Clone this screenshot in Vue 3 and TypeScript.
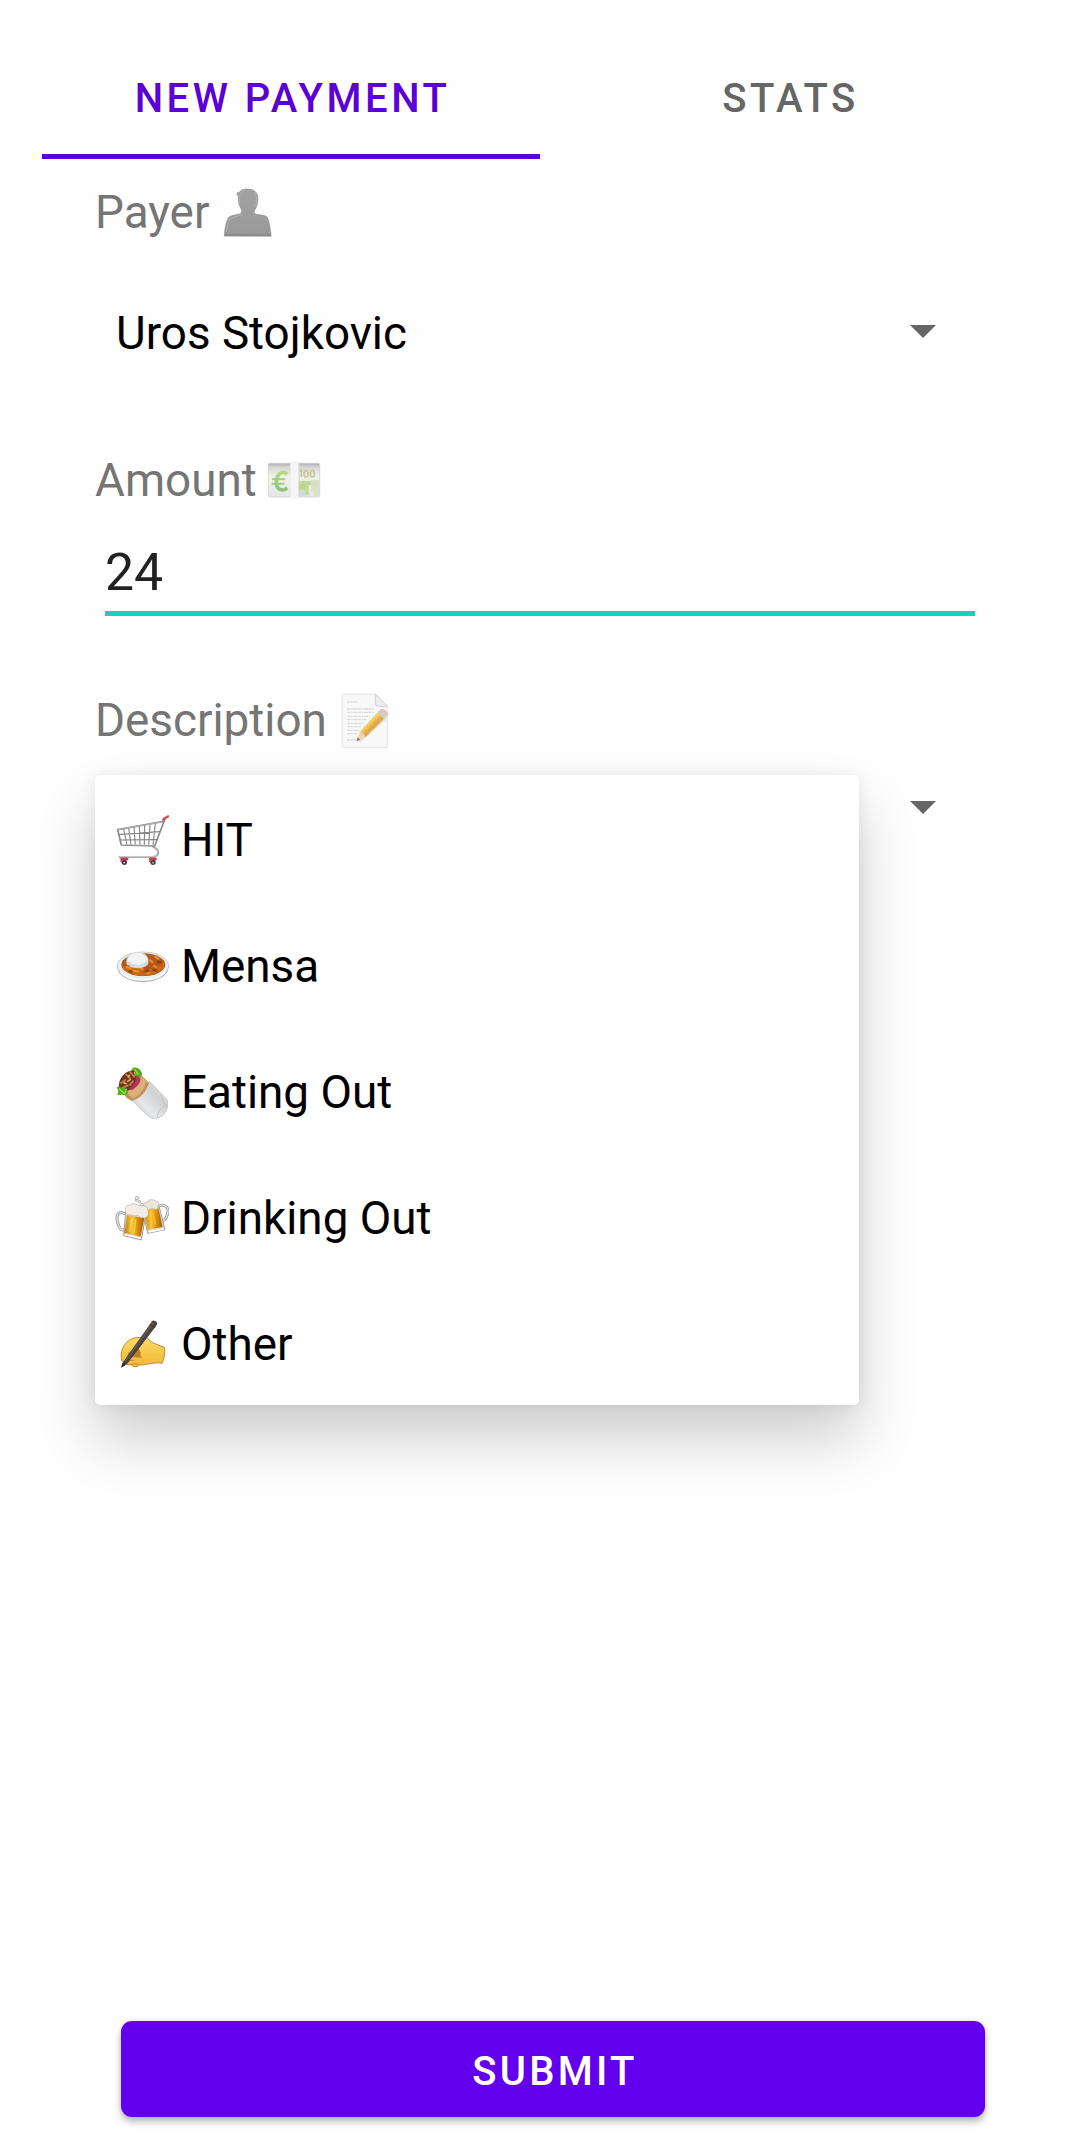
<script setup lang="ts">
const options: { id: string; label: string; viewBox: string }[] = [
  { id: 'cart', label: 'HIT', viewBox: '30 -75 162 378' },
  { id: 'curry', label: 'Mensa', viewBox: '30 -87 162 378' },
  { id: 'wrap', label: 'Eating Out', viewBox: '30 -84 162 378' },
  { id: 'beer', label: 'Drinking Out', viewBox: '30 -81 162 378' },
  { id: 'hand', label: 'Other', viewBox: '30 -78 162 378' },
]
</script>

<template>
  <div class="page">
    <nav class="tabs">
      <div class="tab active">NEW PAYMENT</div>
      <div class="tab">STATS</div>
    </nav>

    <main class="form">
      <div class="label payer">
        <span>Payer</span>
        <svg width="65" height="65" viewBox="0 0 195 195">
          <defs>
            <linearGradient id="bust" x1="0" y1="0" x2="0" y2="1">
              <stop offset="0" stop-color="#a2a2a2" />
              <stop offset="1" stop-color="#999" />
            </linearGradient>
          </defs>
          <path d="M28 168 C29 146 34 120 42 111 C52 104 72 105 79 99 C82 95 80 89 77 84 C71 75 69 59 70 48 L66 45 L67 38 L73 37 C79 28 91 26 103 28 C117 29 126 37 128 49 C130 63 127 78 121 87 C117 94 115 101 124 103 C136 106 151 105 157 112 C163 124 166 150 168 164 L168 169 Z" fill="url(#bust)" stroke="#8d8d8d" stroke-width="2" />
          <path d="M34 156 C37 134 41 119 47 115 C57 108 76 111 83 101 M75 72 C71 56 74 44 78 40 M122 79 C127 63 126 48 120 38" fill="none" stroke="#b4b4b4" stroke-width="2.5" />
          <path d="M29 165 H167" stroke="#858585" stroke-width="4" />
          <path d="M27 169 H168" stroke="#c9c9c9" stroke-width="2" />
        </svg>
      </div>

      <div class="select">
        <span>Uros Stojkovic</span>
        <svg class="caret" width="26" height="13" viewBox="0 0 26 13"><path d="M0 0H26L13 13Z" fill="#666" /></svg>
      </div>

      <div class="label amount">
        <span>Amount</span>
        <svg width="70" height="60" viewBox="0 0 210 180">
          <defs>
            <linearGradient id="note" x1="0" y1="0" x2="0" y2="1">
              <stop offset="0" stop-color="#b0b0b0" />
              <stop offset=".13" stop-color="#d9dad8" />
              <stop offset=".4" stop-color="#eff2ec" />
              <stop offset="1" stop-color="#e6e7e6" />
            </linearGradient>
            <linearGradient id="euro" x1="0" y1="0" x2="0" y2="1">
              <stop offset="0" stop-color="#b4d780" />
              <stop offset="1" stop-color="#8cc47a" />
            </linearGradient>
          </defs>
          <rect x="25" y="40" width="154" height="101" rx="4" fill="url(#note)" stroke="#cdcdcd" stroke-width="2" />
          <path d="M82 72 C65 60 50 73 49 95 C48 118 64 126 82 114" fill="none" stroke="url(#euro)" stroke-width="11" />
          <path d="M36 85 H76 V91 H36Z M35 98 H73 V104 H35Z" fill="#a2cd7e" />
          <path d="M115 92 H153 V105 H137 V137 H115 Z M153 90 H178 V137 H160 V122 H153 Z" fill="#d8e6c5" />
          <path d="M116 93 H153 V106 H146 V136 H136 V107 H116Z" fill="#bfdb93" />
          <path d="M117 106 L136 101 V121 H117 Z" fill="#b9d78d" />
          <path d="M118 122 H134 V138 H118 Z" fill="#ccdbe3" />
          <path d="M153 96 L174 94 L177 107 L163 113 L153 105 Z" fill="#d6dfc5" />
          <path d="M119 64 L124 60 V82" fill="none" stroke="#c9c59b" stroke-width="5" />
          <ellipse cx="138" cy="71" rx="6" ry="10" fill="none" stroke="#c9c59b" stroke-width="5" />
          <ellipse cx="157" cy="71" rx="6" ry="10" fill="none" stroke="#c9c59b" stroke-width="5" />
          <path d="M91 37 H116 V143 H91 Z" fill="#f6f6f6" stroke="#e9e9e9" stroke-width="2" />
          <path d="M117 42 V139" stroke="#d0d0d0" stroke-width="2" />
        </svg>
      </div>

      <div class="input">24</div>

      <div class="label description">
        <span>Description</span>
        <svg width="65" height="70" viewBox="0 0 195 210">
          <defs>
            <linearGradient id="pencil" gradientUnits="userSpaceOnUse" x1="94" y1="105" x2="113" y2="124">
              <stop offset="0" stop-color="#fae18d" />
              <stop offset=".5" stop-color="#f6ce67" />
              <stop offset="1" stop-color="#dda94a" />
            </linearGradient>
          </defs>
          <path d="M26 27 H122 L157 64 V188 H26 Q22 188 22 184 V31 Q22 27 26 27Z" fill="#f8f8f8" stroke="#e0e0e0" stroke-width="2.5" />
          <path d="M121 27 L157 64 H130 Q121 64 121 54Z" fill="#ededed" stroke="#cbcbcb" stroke-width="2.5" />
          <path d="M37 51 H69" stroke="#cecece" stroke-width="3" stroke-dasharray="7 2" />
          <path d="M37 72 H119 M37 82 H116 M37 94 H105 M37 104 H96 M37 115 H86 M37 125 H79 M37 136 H72 M37 146 H69 M37 165 H64" stroke="#dadada" stroke-width="4" stroke-dasharray="9 2 5 2 12 2" />
          <path d="M73 170 L151 101 L159 86" fill="none" stroke="#d5d5d5" stroke-width="7" opacity=".6" />
          <path d="M75 139 L128 81 L147 101 L91 157 Z" fill="url(#pencil)" />
          <path d="M75 139 L65 168 L91 157 C90 149 84 150 85 144 C80 146 77 142 75 139Z" fill="#f1d7ae" />
          <path d="M65 168 L68 157 L76 164Z" fill="#777" />
          <path d="M128 81 L134 75 L153 94 L147 101Z" fill="#c8cdcf" />
          <path d="M134 75 L138 72 Q151 71 158 84 L158 88 L153 94Z" fill="#e9bdb0" />
        </svg>
      </div>

      <div class="select">
        <span></span>
        <svg class="caret" width="26" height="13" viewBox="0 0 26 13"><path d="M0 0H26L13 13Z" fill="#666" /></svg>

        <ul class="dropdown">
          <li v-for="o in options" :key="o.id">
            <svg width="54" height="126" :viewBox="o.viewBox">
              <g v-if="o.id === 'cart'" fill="none" stroke-linecap="round" stroke-linejoin="round">
                <path d="M44 171 H143 C158 170 163 160 158 151 C155 144 147 143 143 139" stroke="#aaa" stroke-width="6" />
                <path d="M45 169 H143 C154 169 158 160 155 153" stroke="#e1e1e1" stroke-width="2" />
                <path d="M56 87 L66 135 M71 84 L78 135 M87 81 L91 136 M103 78 L105 136 M119 75 L118 137 M135 72 L131 137 M151 69 L144 137 M41 104 L164 95 M44 120 L158 119" stroke="#858585" stroke-width="3.4" />
                <path d="M173 65 L38 89 L49 135 L149 138 L180 57" stroke="#898989" stroke-width="5" />
                <path d="M172 66 L40 88 M50 133 L147 136" stroke="#d7d7d7" stroke-width="1.6" />
                <path d="M175 59 C178 53 184 53 189 49" stroke="#d6454f" stroke-width="7" />
                <path d="M50 177 H66 M136 177 H151" stroke="#c93b47" stroke-width="9" />
                <circle cx="58" cy="187" r="8" fill="#463b40" /><circle cx="144" cy="187" r="8" fill="#463b40" />
                <circle cx="58" cy="188" r="2.7" fill="#bbb" /><circle cx="144" cy="188" r="2.7" fill="#bbb" />
                <path d="M48 185 Q49 177 60 178 M134 185 Q136 177 148 178" stroke="#c93b47" stroke-width="4" />
              </g>
              <g v-else-if="o.id === 'curry'">
                <ellipse cx="114" cy="113" rx="76" ry="43" fill="#a9b2b8" />
                <ellipse cx="114" cy="108" rx="77" ry="42" fill="#e9eef1" stroke="#b9c3c9" stroke-width="2.5" />
                <ellipse cx="115" cy="104" rx="66" ry="34" fill="#b0591a" />
                <path d="M52 106 C64 119 90 110 108 116 C130 125 160 114 176 93 C187 111 160 136 116 137 C80 138 49 122 52 106Z" fill="#c46a18" />
                <path d="M65 111 L76 114 M85 123 L99 124 M106 113 L112 116 M136 91 L142 96 M147 108 L153 111 M151 80 L160 86 M125 128 L131 130" stroke="#e58e2a" stroke-width="7" stroke-linecap="round" />
                <path d="M74 124 L80 126 M121 124 L130 122 M158 96 L167 97 M145 119 L154 122" stroke="#8f3c10" stroke-width="7" stroke-linecap="round" />
                <path d="M135 107 L140 109 M112 126 L117 128 M164 105 L168 106" stroke="#d94c20" stroke-width="6" stroke-linecap="round" />
                <path d="M64 99 C62 81 76 66 97 66 C119 66 134 80 130 98 C129 111 113 111 102 115 C89 114 77 115 73 106 C67 106 64 104 64 99Z" fill="#d5dadd" />
                <path d="M68 94 C68 77 80 68 97 68 C113 68 126 78 127 90 C120 101 108 98 102 106 C93 101 79 107 77 96Z" fill="#f2f4f4" />
                <path d="M47 127 C72 157 154 158 180 127" fill="none" stroke="#fff" stroke-width="5" />
              </g>
              <g v-else-if="o.id === 'wrap'">
                <defs>
                  <linearGradient id="paper" x1="0" y1="1" x2="1" y2="0">
                    <stop offset="0" stop-color="#b0b2b4" />
                    <stop offset=".35" stop-color="#e7e8e9" />
                    <stop offset=".65" stop-color="#d0d1d3" />
                    <stop offset="1" stop-color="#eee" />
                  </linearGradient>
                </defs>
                <path d="M46 97 C57 75 82 61 105 57 L133 86 L83 137 L65 128Z" fill="#dcae78" stroke="#b98048" stroke-width="2" />
                <path d="M57 112 L82 135 C101 130 120 112 127 82" fill="none" stroke="#c98d52" stroke-width="8" />
                <path d="M82 137 C107 130 127 109 134 79 L186 134 C194 156 180 184 157 190 C146 194 135 188 128 182Z" fill="url(#paper)" stroke="#bcbdbe" stroke-width="2" />
                <path d="M169 118 C171 137 181 151 189 156 M158 189 C155 168 174 154 188 148" fill="none" stroke="#b7b9bb" stroke-width="2" />
                <path d="M42 98 C39 77 53 53 76 47 C94 40 109 54 105 70 C101 90 80 109 59 108Z" fill="#6b3521" />
                <path d="M48 84 L61 75 M63 58 L75 70 M76 51 L87 65 M52 99 L68 91 M75 90 L84 79" stroke="#c27a46" stroke-width="6" stroke-linecap="round" />
                <path d="M57 83 L63 86 M70 65 L73 61 M68 79 L76 74 M89 53 L92 61" stroke="#e2b567" stroke-width="5" stroke-linecap="round" />
                <path d="M72 105 C79 94 86 93 89 82 C93 76 96 70 91 66 L101 61 C113 72 105 91 83 104Z" fill="#b73262" />
                <path d="M80 44 C85 33 97 38 104 43 L112 56 L105 70 L96 62 L86 64 L91 51Z M35 97 L43 94 L49 99 L60 96 L70 112 L63 121 L50 119 L37 120 L40 109Z" fill="#52ac1e" />
                <path d="M90 44 L99 58 M43 102 L57 115 M64 103 L60 114" stroke="#a0d94c" stroke-width="4" stroke-linecap="round" />
              </g>
              <g v-else-if="o.id === 'beer'">
                <defs>
                  <linearGradient id="lager" x1="0" y1="0" x2="1" y2="0">
                    <stop offset="0" stop-color="#c97808" />
                    <stop offset=".4" stop-color="#f9c93a" />
                    <stop offset=".65" stop-color="#dd910a" />
                    <stop offset="1" stop-color="#a95d08" />
                  </linearGradient>
                </defs>
                <path d="M61 101 C39 93 32 106 38 127 C42 146 50 154 60 148" fill="none" stroke="#96989a" stroke-width="9" />
                <path d="M61 101 C39 93 32 106 38 127 C42 146 50 154 60 148" fill="none" stroke="#e2e3e4" stroke-width="4" />
                <path d="M164 77 C184 71 193 86 187 104 C182 119 175 125 167 121" fill="none" stroke="#96989a" stroke-width="9" />
                <path d="M164 77 C184 71 193 86 187 104 C182 119 175 125 167 121" fill="none" stroke="#e2e3e4" stroke-width="4" />
                <path d="M111 83 L161 74 L180 149 L128 160 Z" fill="#e2e2e2" stroke="#8d8e8f" stroke-width="2.5" />
                <path d="M116 90 L160 82 L173 141 L128 150 Z" fill="url(#lager)" />
                <path d="M62 94 L122 105 L109 180 L56 167 Z" fill="#e2e2e2" stroke="#8d8e8f" stroke-width="2.5" />
                <path d="M66 105 L118 114 L107 170 L58 159Z" fill="url(#lager)" />
                <path d="M80 116 L74 155 M92 118 L87 159" stroke="#ffe06c" stroke-width="4" opacity=".7" />
                <path d="M143 98 L151 133" stroke="#f8b929" stroke-width="5" />
                <path d="M116 90 C108 81 115 66 128 66 C131 56 147 58 151 63 C160 62 164 73 159 79 C160 90 151 91 142 84 C135 85 126 96 116 90Z" fill="#ece5db" stroke="#b3aaa0" stroke-width="2" />
                <path d="M62 97 C59 87 61 76 72 76 C79 67 95 72 100 77 C113 72 128 78 128 90 C133 99 129 113 119 113 C109 115 102 111 98 105 C88 113 79 103 73 104 C66 107 64 103 62 97Z" fill="#f3ede5" stroke="#b9aea2" stroke-width="2" />
                <path d="M70 107 C79 104 85 112 93 109" stroke="#e9b98c" stroke-width="4" fill="none" />
                <g fill="#eee" stroke="#999" stroke-width="2"><circle cx="96" cy="54" r="5" /><circle cx="103" cy="65" r="4" /><circle cx="111" cy="74" r="4" /><circle cx="93" cy="61" r="3" /></g>
                <path d="M59 164 L107 175 M131 156 L176 147" stroke="#fff" stroke-width="4" />
              </g>
              <g v-else stroke-linejoin="round">
                <defs>
                  <linearGradient id="skin" x1="0" y1="0" x2="0" y2="1">
                    <stop offset="0" stop-color="#ffdc62" />
                    <stop offset="1" stop-color="#f1b637" />
                  </linearGradient>
                </defs>
                <path d="M49 160 C47 143 52 126 65 112 C78 99 96 96 109 98 C118 93 129 98 132 105 C145 117 164 121 178 127 C182 143 177 162 171 175 C153 171 141 176 124 178 C111 182 104 178 101 181 C96 187 84 186 79 179 C66 181 57 177 62 171 C53 173 49 168 49 160Z" fill="url(#skin)" stroke="#ad7626" stroke-width="2.5" />
                <path d="M70 143 C83 139 98 138 101 129 L107 144 C104 155 109 158 111 158 C97 155 78 159 67 154Z" fill="#be7c24" />
                <path d="M71 151 C87 149 97 160 111 157 M63 171 C67 166 78 165 89 166 M80 179 C85 175 91 176 100 178" fill="none" stroke="#c48a2d" stroke-width="3" />
                <path d="M49 187 L54 172 L138 53 Q142 44 150 48 Q160 51 155 61 L66 177Z" fill="#49423f" />
                <path d="M61 169 L145 54" stroke="#665c57" stroke-width="4" />
                <path d="M134 58 L151 68" stroke="#272322" stroke-width="2" />
                <path d="M48 188 L53 173 L63 179Z" fill="#2e2a2b" />
              </g>
            </svg>
            <span>{{ o.label }}</span>
          </li>
        </ul>
      </div>

      <button class="submit" type="button">SUBMIT</button>
    </main>
  </div>
</template>

<style>
body {
  margin: 0;
  background: #fefefe;
}
</style>

<style scoped>
.page {
  box-sizing: border-box;
  display: flex;
  flex-direction: column;
  height: 2153px;
  padding: 42px 42px 36px;
  background: #fefefe;
  font-family: Roboto, sans-serif;
  font-size: 45.8px;
  color: #000;
}
.page svg {
  display: block;
  flex: none;
}
.tabs {
  display: flex;
  height: 117px;
}
.tab {
  box-sizing: border-box;
  flex: 1;
  padding-left: 3px;
  border-bottom: 5px solid transparent;
  line-height: 114px;
  text-align: center;
  font-size: 40px;
  font-weight: 500;
  letter-spacing: 3.5px;
  color: #666;
}
.tab.active {
  color: #5b00d6;
  border-color: #5b00d6;
}
.form {
  flex: 1;
  display: flex;
  flex-direction: column;
  padding: 21px 53px 0;
}
.label {
  display: flex;
  align-items: center;
  color: #757575;
}
.payer {
  height: 65px;
}
.payer span {
  width: 120px;
}
.amount {
  height: 60px;
  margin-top: 69px;
}
.amount span {
  width: 165px;
}
.description {
  height: 70px;
  margin-top: 69px;
}
.description span {
  width: 240px;
}
.select {
  position: relative;
  display: flex;
  align-items: center;
  justify-content: space-between;
  height: 96px;
  padding: 0 49px 0 21px;
}
.payer + .select {
  margin-top: 40px;
}
.description + .select {
  margin-top: 5px;
}
.caret {
  margin-top: -3px;
}
.description + .select .caret {
  margin-top: -1px;
}
.input {
  margin: 23px 10px 0;
  height: 78px;
  border-bottom: 5px solid #1ad1bf;
  line-height: 80px;
  font-size: 51.75px;
  color: #212121;
}
.dropdown {
  position: absolute;
  top: 15px;
  left: 0;
  width: 764px;
  margin: 0;
  padding: 0;
  list-style: none;
  background: #fff;
  border-radius: 5px;
  box-shadow: 0 34px 58px rgba(0, 0, 0, 0.19), 0 0 16px rgba(0, 0, 0, 0.08);
}
.dropdown li {
  display: flex;
  align-items: center;
  gap: 12px;
  height: 126px;
  padding-left: 20px;
}
.dropdown li span {
  padding-top: 4px;
}
.submit {
  margin: auto 0 0 26px;
  width: 864px;
  height: 96px;
  padding: 4px 0 0 4px;
  border: 0;
  border-radius: 11px;
  background: #6200ee;
  box-shadow: 0 5px 7px rgba(0, 0, 0, 0.25), 0 0 4px rgba(0, 0, 0, 0.12);
  font: 500 40px Roboto, sans-serif;
  letter-spacing: 3.3px;
  color: #fff;
}
</style>
